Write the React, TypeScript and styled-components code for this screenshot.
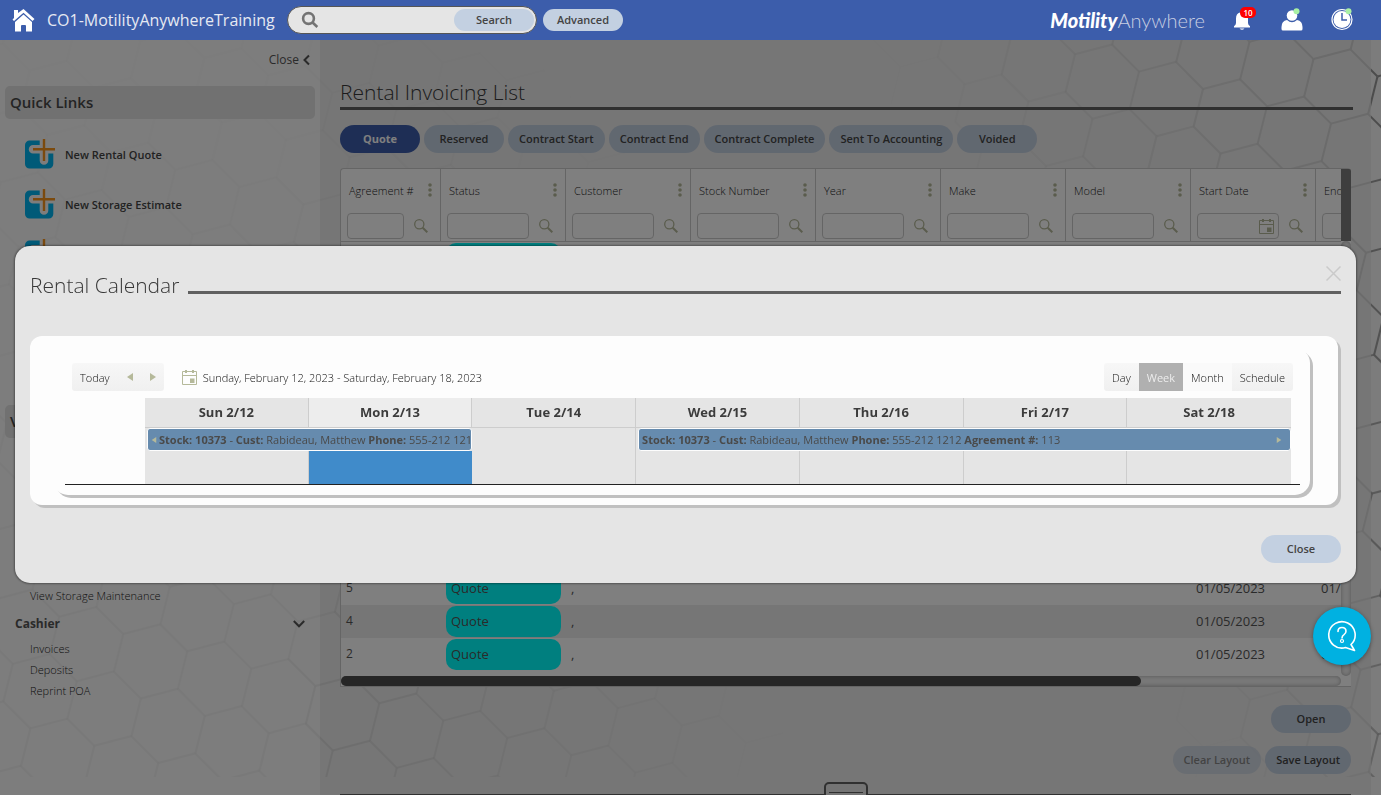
import React from "react";
import styled, { createGlobalStyle, css } from "styled-components";

const GlobalStyle = createGlobalStyle`
  * { box-sizing: border-box; }
  html, body { margin: 0; padding: 0; }
  body, button, input {
    font-family: "Open Sans", "Liberation Sans", sans-serif;
    font-size: 11px;
    color: #555;
  }
  button { margin: 0; padding: 0; border: 0; background: none; cursor: pointer; }
  a { color: inherit; text-decoration: none; }
  ul { list-style: none; margin: 0; padding: 0; }
  h1, h2, h3 { margin: 0; }
`;

/* ---------- frame ---------- */

const Page = styled.div`
  position: relative;
  display: flex;
  flex-direction: column;
  height: 100vh;
  overflow: hidden;
  background: #f8f8f8;
`;

const TopBar = styled.header`
  flex: none;
  display: flex;
  align-items: center;
  height: 40px;
  padding: 0 28px 0 11px;
  background: #3c5dab;
`;

const Shell = styled.div`
  position: relative;
  flex: 1;
  min-height: 0;
  display: grid;
  grid-template-columns: 320px minmax(0, 1fr);
  padding-right: 10px;
`;

const Comb = styled.svg<{ $side: "left" | "right" }>`
  position: absolute;
  top: 0;
  ${(p) => p.$side}: 0;
`;

/* ---------- top bar ---------- */

const HomeLink = styled.a`
  display: flex;
  width: 24px;
`;

const SiteName = styled.div`
  margin-left: 12px;
  width: 240px;
  font-size: 16px;
  line-height: 24px;
  color: #e6e9f2;
  white-space: nowrap;
`;

const SearchBox = styled.form`
  display: flex;
  align-items: center;
  width: 250px;
  height: 28px;
  padding: 0 2px 0 13px;
  border: 1px solid #555;
  border-radius: 14px;
  background: #e5e5e5;
`;

const SearchInput = styled.input`
  flex: 1;
  min-width: 0;
  border: 0;
  outline: 0;
  background: transparent;
`;

const Pill = styled.button<{ $active?: boolean; $short?: boolean; $faded?: boolean }>`
  flex: none;
  min-width: 80px;
  height: ${(p) => (p.$short ? 22 : 28)}px;
  padding: 0 11px 1px;
  border-radius: 14px;
  font-weight: ${(p) => (p.$active ? 700 : 600)};
  white-space: nowrap;
  background: ${(p) => (p.$active ? "#3c5dab" : "#c3d0e1")};
  color: ${(p) => (p.$active ? "#fff" : "#444")};
  opacity: ${(p) => (p.$faded ? 0.6 : 1)};
`;

const AdvancedSlot = styled.div`
  display: flex;
  margin-left: 6px;
`;

const Brand = styled.div`
  margin-left: auto;
  font-family: Lato, sans-serif;
  font-size: 20px;
  line-height: 24px;
  font-weight: 300;
  color: #c8cfe2;
  white-space: nowrap;
  b { font-weight: 900; font-style: italic; color: #fff; }
`;

const TopIcons = styled.nav`
  display: flex;
  align-items: center;
  gap: 28px;
  margin-left: 26px;
`;

const TopIcon = styled.button`
  position: relative;
  display: flex;
  width: 22px;
  height: 24px;
`;

const Badge = styled.span`
  position: absolute;
  top: -1px;
  left: 9px;
  width: 16px;
  height: 11px;
  border-radius: 5px;
  background: #f00;
  color: #fff;
  font-size: 8px;
  line-height: 11px;
  font-weight: 600;
  text-align: center;
`;

/* ---------- sidebar ---------- */

const Sidebar = styled.aside`
  position: relative;
  padding: 0 5px;
  background: rgba(250, 250, 250, 0.8);
`;

const CollapseButton = styled.button`
  display: flex;
  align-items: center;
  gap: 4px;
  margin-left: auto;
  padding: 10px 5px 16px 0;
  font-size: 12px;
  line-height: 20px;
`;

const SectionTitle = styled.h2`
  height: 33px;
  padding: 0 5px;
  border-radius: 5px;
  background: #e2e2e2;
  font-size: 15px;
  line-height: 32px;
  font-weight: 600;
  color: #484848;
`;

const QuickList = styled.ul`
  min-height: 276px;
  padding: 10px 20px 0;
  margin-bottom: 10px;
`;

const QuickItem = styled.li`
  a {
    display: flex;
    align-items: center;
    gap: 10px;
    height: 50px;
    font-weight: 600;
    color: #444;
  }
`;

const LinkList = styled.ul<{ $tall?: boolean }>`
  display: flex;
  flex-direction: column;
  justify-content: flex-end;
  padding-left: 25px;
  font-weight: 300;
  color: #1c1c1c;
  ${(p) => p.$tall && css`min-height: 168px;`}
  a { display: block; line-height: 21px; }
`;

const GroupToggle = styled.button`
  display: flex;
  align-items: center;
  justify-content: space-between;
  width: 100%;
  height: 32px;
  padding: 3px 10px 0;
  font-size: 12px;
  font-weight: 700;
`;

/* ---------- main ---------- */

const Main = styled.main`
  position: relative;
  padding: 40px 20px 0;
  background: rgba(232, 232, 232, 0.75);
`;

const PageTitle = styled.h1`
  margin-right: -2px;
  padding-bottom: 2px;
  border-bottom: 3px solid #606060;
  font-size: 21px;
  line-height: 25px;
  font-weight: 300;
  color: #383838;
`;

const TabBar = styled.div`
  display: flex;
  gap: 4px;
  margin: 15px 0;
`;

const GridBox = styled.div`
  display: grid;
  grid-template-columns: minmax(0, 1fr) 10px;
  border: 1px solid #cacaca;
  border-right: 0;
  border-radius: 4px 4px 0 0;
  background: #fff;
`;

const GridClip = styled.div`
  overflow: hidden;
  padding-bottom: 5px;
`;

const DataTable = styled.table`
  width: 1100px;
  table-layout: fixed;
  border-collapse: separate;
  border-spacing: 0;
`;

const HeadCell = styled.th<{ $w: number }>`
  width: ${(p) => p.$w}px;
  height: 73px;
  padding: 11px 7px 0 6px;
  border-right: 1px solid #cacaca;
  border-bottom: 1px solid #cacaca;
  vertical-align: top;
  text-align: left;
  font-weight: 300;
  color: #1c1c1c;
`;

const HeadLabel = styled.div`
  display: flex;
  align-items: center;
  justify-content: space-between;
  height: 20px;
  padding: 0 1px 0 2px;
  white-space: nowrap;
`;

const FilterRow = styled.div`
  display: flex;
  align-items: center;
  gap: 10px;
  margin-top: 13px;
  padding-right: 5px;
  svg { flex: none; }
`;

const FilterField = styled.label`
  flex: 1;
  min-width: 0;
  display: flex;
  align-items: center;
  height: 26px;
  padding-right: 4px;
  border: 1px solid #cacaca;
  border-radius: 4px;
  input { width: 100%; min-width: 0; border: 0; outline: 0; background: none; }
`;

const Row = styled.tr`
  height: 33px;
  font-size: 13px;
  &:nth-child(even) { background: #ececec; }
`;

const Cell = styled.td<{ $small?: boolean }>`
  height: 33px;
  padding: 0 5px 1px;
  line-height: 20px;
  ${(p) => p.$small && css`font-size: 12px;`}
`;

const StatusTag = styled.div`
  height: 31px;
  padding: 0 5px;
  border-radius: 10px;
  background: #00ffff;
  line-height: 31px;
`;

const SideRail = styled.div`
  display: flex;
  flex-direction: column;
`;

const RailTop = styled.div`
  height: 72px;
  border-radius: 0 2px 0 0;
  background: #7c7c7c;
`;

const RailTrack = styled.div`
  flex: 1;
  border-radius: 5px;
  background: #f2f2f2;
  box-shadow: inset 0 0 4px #aaa;
`;

const BottomTrack = styled.div`
  height: 10px;
  border-radius: 5px;
  background: #f2f2f2;
  box-shadow: inset 0 0 4px #aaa;
`;

const BottomThumb = styled.div`
  width: 80%;
  height: 10px;
  border-radius: 5px;
  background: #4c4c4c;
`;

const Actions = styled.div`
  display: flex;
  flex-direction: column;
  gap: 13px;
  margin-top: 18px;
`;

const ButtonRow = styled.div`
  display: flex;
  justify-content: flex-end;
  gap: 4px;
`;

const Drawer = styled.footer`
  position: relative;
  margin-top: 20px;
  border-top: 2px solid #606060;
`;

const DrawerHandle = styled.button`
  position: absolute;
  left: 50%;
  top: -14px;
  width: 44px;
  height: 24px;
  margin-left: -22px;
  padding: 7px 3px;
  border: 2px solid #606060;
  border-radius: 5px;
  background: #e8e8e8;
  span { display: block; height: 4px; border: solid #606060; border-width: 1px 0; }
`;

/* ---------- dialog ---------- */

const Overlay = styled.div`
  position: fixed;
  inset: 40px 0 0;
  display: flex;
  align-items: center;
  padding: 0 25px 6px 15px;
  background: rgba(0, 0, 0, 0.5);
`;

const Dialog = styled.section`
  flex: 1;
  min-width: 0;
  padding: 20px 15px;
  border-radius: 15px;
  background: #e5e5e5;
  box-shadow: 0 0 2px 1px rgba(0, 0, 0, 0.35);
`;

const DialogHead = styled.div`
  position: relative;
  display: flex;
  align-items: flex-end;
  gap: 9px;
  h2 { font-size: 21px; line-height: 28px; font-weight: 300; padding: 5px 0 1px; color: #383838; }
`;

const TitleRule = styled.div`
  flex: 1;
  height: 3px;
  margin-bottom: 6px;
  background: #606060;
`;

const DismissButton = styled.button`
  position: absolute;
  top: 0;
  right: 0;
  display: flex;
`;

const Panel = styled.div`
  margin: 36px 3px 0 0;
  padding: 12px 28px 10px 23px;
  border-radius: 12px;
  background: #fdfdfd;
  box-shadow: 3px 3px 0 #c0c0c0;
`;

const Scheduler = styled.div`
  padding: 15px 10px 10px 12px;
  border-radius: 15px;
  background: #fdfdfd;
  box-shadow: 3px 3px 0 #c0c0c0;
`;

const Toolbar = styled.div`
  display: flex;
  align-items: center;
  padding: 0 7px;
`;

const Segment = styled.div`
  display: flex;
  height: 28px;
  border-radius: 3px;
  overflow: hidden;
  background: linear-gradient(#f7f7f7, #f0f0f0);
`;

const SegmentButton = styled.button<{ $on?: boolean; $hover?: boolean }>`
  display: flex;
  align-items: center;
  padding: 0 8px;
  font-weight: 300;
  color: #111;
  &[aria-label] { padding: 0 7px 0 8px; }
  ${(p) => p.$on && css`background: #b0b0b0; color: #ececec; font-weight: 400;`}
  ${(p) => p.$hover && css`background: #fafafa;`}
`;

const RangeLabel = styled.div`
  display: flex;
  align-items: center;
  gap: 6px;
  margin: 0 auto 0 18px;
  font-weight: 300;
  color: #111;
`;

const CalendarFrame = styled.div`
  margin-top: 7px;
  padding: 0 9px 0 80px;
  border-bottom: 1px solid #222;
`;

const Calendar = styled.table`
  width: 100%;
  table-layout: fixed;
  border-collapse: separate;
  border-spacing: 0;
  background: #e5e5e5;
`;

const DayHead = styled.th<{ $today?: boolean }>`
  height: 30px;
  padding: 0 0 2px;
  border-bottom: 1px solid #cdcdcd;
  border-right: 1px solid #cdcdcd;
  font-size: 13px;
  font-weight: 700;
  color: #3c3c3c;
  background: ${(p) => (p.$today ? "#ededed" : "#e5e5e5")};
  &:last-child { border-right: 0; }
`;

const DayCell = styled.td<{ $today?: boolean }>`
  height: 33px;
  padding: 0;
  border-right: 1px solid ${(p) => (p.$today ? "#408bca" : "#cdcdcd")};
  background: ${(p) => (p.$today ? "#408bca" : "transparent")};
  &:last-child { border-right: 0; }
`;

const EventCell = styled.td`
  height: 23px;
  padding: 0 0 0 2px;
  &:nth-child(2) { border-right: 1px solid #cdcdcd; }
`;

const EventBar = styled.div`
  display: flex;
  align-items: center;
  gap: 2px;
  height: 23px;
  padding: 0 8px 0 3px;
  border: 1px solid #fdfdfd;
  border-radius: 3px;
  background: #668bae;
  color: #4a4a4a;
  white-space: nowrap;
  overflow: hidden;
  &:has(svg:first-child) { padding-right: 0; }
  svg { flex: none; }
`;

const EventText = styled.span`
  flex: 1;
  min-width: 0;
  overflow: hidden;
`;

const DialogFoot = styled.div`
  display: flex;
  justify-content: flex-end;
  margin-top: 30px;
`;

const HelpButton = styled.button`
  position: fixed;
  right: 10px;
  bottom: 130px;
  display: flex;
  align-items: center;
  justify-content: center;
  width: 58px;
  height: 58px;
  border-radius: 29px;
  background: #00b1e1;
  box-shadow: 0 1px 4px rgba(0, 0, 0, 0.4);
`;

/* ---------- drawings ---------- */

// Three edges leave every even vertex of the tilted honeycomb.
const STEP_A = [64, 17.33];
const STEP_B = [46.5, -47.2];
const SPOKES = [[37.2, -9.8], [-9.3, 37.4], [-27.3, -27.3]];

function Honeycomb({ side, width, origin, fade }: {
  side: "left" | "right"; width: number; origin: number[];
  fade: (x: number, y: number) => number;
}) {
  const height = 737;
  const edges: React.ReactNode[] = [];
  for (let i = -20; i <= 20; i++) {
    for (let j = -20; j <= 20; j++) {
      const x = origin[0] + i * STEP_A[0] + j * STEP_B[0];
      const y = origin[1] + i * STEP_A[1] + j * STEP_B[1];
      if (x < -50 || x > width + 50 || y < -50 || y > height + 50) continue;
      const o = Math.max(0, Math.min(1, fade(x, y)));
      if (o < 0.02) continue;
      SPOKES.forEach(([dx, dy], k) =>
        edges.push(<line key={`${i},${j},${k}`} x1={x} y1={y} x2={x + dx} y2={y + dy} strokeOpacity={o} />));
    }
  }
  return (
    <Comb $side={side} width={width} height={height} stroke="#989898" strokeWidth={2} aria-hidden>
      {edges}
    </Comb>
  );
}

const HomeIcon = () => (
  <svg width="24" height="24" viewBox="0 0 24 24" fill="#fff">
    <path d="M3 2h4v3L12.500 1 23.500 11l-2 2L12.500 4.800 3 13 1.500 11.500 3 10z" />
    <path d="M12.500 6.500 21 14v9.500h-6V18q0-1-1-1h-3q-1 0-1 1v5.500H4V14z" />
  </svg>
);

const SearchGlyph = () => (
  <svg width="18" height="18" viewBox="0 0 18 18" fill="none" stroke="#737373" strokeWidth="2.600">
    <circle cx="7.500" cy="7.500" r="5.400" />
    <path d="M11.300 11.300l5 4.700" />
  </svg>
);

const BellIcon = () => (
  <svg width="22" height="24" viewBox="0 0 22 24" fill="#fff">
    <path d="M9 4.500q2-1.500 4 0 4 1.200 4 6v4.500q0 2 2 3.200v1.300H3v-1.300q2-1.200 2-3.200v-4.500q0-4.800 4-6z" />
    <path d="M8.500 20.500h5q-2.500 2.400-5 0z" />
  </svg>
);

const UserIcon = () => (
  <svg width="22" height="24" viewBox="0 0 22 24" fill="#fff">
    <circle cx="11" cy="7.500" r="5.300" />
    <path d="M6 12q5 4.500 10 0 5.500 1 5.500 7v2q0 1.500-1.500 1.500H2Q.5 22.500.5 21v-2q0-6 5.500-7z" />
    <circle cx="15.500" cy="3.200" r="3" fill="#a9f0a4" />
  </svg>
);

const ClockIcon = () => (
  <svg width="22" height="24" viewBox="0 0 22 24">
    <circle cx="11" cy="11.500" r="10" fill="none" stroke="#fff" strokeWidth="1.200" />
    <circle cx="11" cy="11.500" r="8.500" fill="#fff" />
    <path d="M11 5v7h5" fill="none" stroke="#3c5dab" strokeWidth="1.500" />
    <circle cx="17.500" cy="3.200" r="3" fill="#a9f0a4" />
  </svg>
);

const QuickIcon = () => (
  <svg width="30" height="30" viewBox="0 0 30 30">
    <path d="M5 1.500h9.700V6H8a4 4 0 0 0 0 8.500h6.700v7a4.300 4.300 0 0 0 8.600 0v-7h5V25a4.500 4.500 0 0 1-4.500 4.500H4.500A4.500 4.500 0 0 1 0 25V6a4.500 4.500 0 0 1 5-4.500z" fill="#00b4f0" />
    <path d="M8 10.300h22M19 0v22" stroke="#f7941d" strokeWidth="2.400" />
  </svg>
);

const KebabIcon = () => (
  <svg width="4" height="14" viewBox="0 0 4 14" fill="#b5b99a">
    <circle cx="2" cy="2" r="1.800" /><circle cx="2" cy="7" r="1.800" /><circle cx="2" cy="12" r="1.800" />
  </svg>
);

const FilterIcon = () => (
  <svg width="14" height="14" viewBox="0 0 14 14" fill="none" stroke="#b5b99a">
    <circle cx="5.300" cy="5.300" r="4.600" strokeWidth="1.300" />
    <path d="M8.700 8.700l4.600 4.600" strokeWidth="2" />
  </svg>
);

const CalendarIcon = () => (
  <svg width="15" height="15" viewBox="0 0 15 15" fill="none" stroke="#b5b99a">
    <path d="M.5 1.500h14v13H.5zM.5 5.500h14" />
    <path d="M4 0v3M11 0v3" strokeWidth="2" />
    <path d="M8 8.500h4.500V13H8z" fill="#b5b99a" stroke="none" />
  </svg>
);

const Arrow = ({ dir, size = 8 }: { dir: "left" | "right"; size?: number }) => (
  <svg width={size} height={size} viewBox="0 0 8 8" fill="#b5b99a">
    <path d={dir === "left" ? "M7 0v8L1 4z" : "M1 0v8l6-4z"} />
  </svg>
);

/* ---------- data ---------- */

const tabs = ["Quote", "Reserved", "Contract Start", "Contract End", "Contract Complete", "Sent To Accounting", "Voided"];
const columns = ["Agreement #", "Status", "Customer", "Stock Number", "Year", "Make", "Model", "Start Date", "End Date"];
const rows = [...Array(10).fill(null), "5", "4", "2"] as (string | null)[];
const days = ["Sun 2/12", "Mon 2/13", "Tue 2/14", "Wed 2/15", "Thu 2/16", "Fri 2/17", "Sat 2/18"];

const Booking = () => (
  <EventText>
    <b>Stock: 10373</b> - <b>Cust:</b> Rabideau, Matthew <b>Phone:</b> 555-212 1212 <b>Agreement #:</b> 113
  </EventText>
);

export default function App() {
  return (
    <Page>
      <GlobalStyle />
      <TopBar>
        <HomeLink href="#" aria-label="Home"><HomeIcon /></HomeLink>
        <SiteName>CO1-MotilityAnywhereTraining</SiteName>
        <SearchBox onSubmit={(e) => e.preventDefault()}>
          <SearchGlyph />
          <SearchInput aria-label="Search" />
          <Pill $short>Search</Pill>
        </SearchBox>
        <AdvancedSlot><Pill $short>Advanced</Pill></AdvancedSlot>
        <Brand><b>Motility</b>Anywhere</Brand>
        <TopIcons>
          <TopIcon aria-label="Notifications"><BellIcon /><Badge>10</Badge></TopIcon>
          <TopIcon aria-label="Account"><UserIcon /></TopIcon>
          <TopIcon aria-label="Time clock"><ClockIcon /></TopIcon>
        </TopIcons>
      </TopBar>

      <Shell>
        <Honeycomb side="left" width={900} origin={[123.3, 594]}
          fade={(x, y) => {
            const base = x < 300 ? 0.42 : 0.65;
            return base * (1 - Math.hypot(Math.max(0, x - 340) / 440, (737 - y) / 850));
          }} />
        <Honeycomb side="right" width={600} origin={[294, 14.3]}
          fade={(x, y) => 1.1 * (1 - (600 - x) / (510 - y * 0.45)) * (1 - y / 1400)} />

        <Sidebar>
          <CollapseButton>
            Close
            <svg width="7" height="12" viewBox="0 0 7 12" fill="none" stroke="#555" strokeWidth="2"><path d="M6 1.500L1.500 6 6 10.500" /></svg>
          </CollapseButton>
          <SectionTitle>Quick Links</SectionTitle>
          <QuickList>
            <QuickItem><a href="#"><QuickIcon />New Rental Quote</a></QuickItem>
            <QuickItem><a href="#"><QuickIcon />New Storage Estimate</a></QuickItem>
            <QuickItem><a href="#" aria-label="New"><QuickIcon /></a></QuickItem>
          </QuickList>
          <SectionTitle>V</SectionTitle>
          <LinkList $tall>
            <li><a href="#">View Storage Maintenance</a></li>
          </LinkList>
          <GroupToggle>
            Cashier
            <svg width="12" height="8" viewBox="0 0 12 8" fill="none" stroke="#555" strokeWidth="2"><path d="M.8 1L6 6.300 11.200 1" /></svg>
          </GroupToggle>
          <LinkList>
            <li><a href="#">Invoices</a></li>
            <li><a href="#">Deposits</a></li>
            <li><a href="#">Reprint POA</a></li>
          </LinkList>
        </Sidebar>

        <Main>
          <PageTitle>Rental Invoicing List</PageTitle>
          <TabBar>
            {tabs.map((t, i) => <Pill key={t} $active={i === 0}>{t}</Pill>)}
          </TabBar>
          <GridBox>
            <GridClip>
              <DataTable>
                <thead>
                  <tr>
                    {columns.map((c, i) => (
                      <HeadCell key={c} $w={i === 0 ? 100 : 125}>
                        <HeadLabel>{c}<KebabIcon /></HeadLabel>
                        <FilterRow>
                          <FilterField>
                            <input aria-label={`Filter ${c}`} />
                            {c.endsWith("Date") && <CalendarIcon />}
                          </FilterField>
                          <FilterIcon />
                        </FilterRow>
                      </HeadCell>
                    ))}
                  </tr>
                </thead>
                <tbody>
                  {rows.map((id, i) => (
                    <Row key={i}>
                      <Cell $small>{id}</Cell>
                      <Cell><StatusTag>{id && "Quote"}</StatusTag></Cell>
                      <Cell>{id && ","}</Cell>
                      <Cell /><Cell /><Cell /><Cell />
                      <Cell>{id && "01/05/2023"}</Cell>
                      <Cell>{id && "01/05/2023"}</Cell>
                    </Row>
                  ))}
                </tbody>
              </DataTable>
            </GridClip>
            <SideRail><RailTop /><RailTrack /></SideRail>
            <BottomTrack><BottomThumb /></BottomTrack>
          </GridBox>
          <Actions>
            <ButtonRow><Pill>Open</Pill></ButtonRow>
            <ButtonRow>
              <Pill $faded>Clear Layout</Pill>
              <Pill>Save Layout</Pill>
            </ButtonRow>
          </Actions>
          <Drawer>
            <DrawerHandle aria-label="Expand details"><span /></DrawerHandle>
          </Drawer>
        </Main>
      </Shell>

      <Overlay>
        <Dialog role="dialog" aria-labelledby="rental-calendar">
          <DialogHead>
            <h2 id="rental-calendar">Rental Calendar</h2>
            <TitleRule />
            <DismissButton aria-label="Dismiss">
              <svg width="15" height="15" viewBox="0 0 15 15" stroke="#cacaca" strokeWidth="1.500"><path d="M.5.5l14 14M14.500.5l-14 14" /></svg>
            </DismissButton>
          </DialogHead>
          <Panel>
            <Scheduler>
              <Toolbar>
                <Segment>
                  <SegmentButton>Today</SegmentButton>
                  <SegmentButton aria-label="Previous"><Arrow dir="left" /></SegmentButton>
                  <SegmentButton aria-label="Next"><Arrow dir="right" /></SegmentButton>
                </Segment>
                <RangeLabel><CalendarIcon />Sunday, February 12, 2023 - Saturday, February 18, 2023</RangeLabel>
                <Segment>
                  <SegmentButton>Day</SegmentButton>
                  <SegmentButton $on>Week</SegmentButton>
                  <SegmentButton $hover>Month</SegmentButton>
                  <SegmentButton>Schedule</SegmentButton>
                </Segment>
              </Toolbar>
              <CalendarFrame>
                <Calendar>
                  <thead>
                    <tr>{days.map((d, i) => <DayHead key={d} $today={i === 1}>{d}</DayHead>)}</tr>
                  </thead>
                  <tbody>
                    <tr>
                      <EventCell colSpan={2}><EventBar><Arrow dir="left" size={6} /><Booking /></EventBar></EventCell>
                      <EventCell />
                      <EventCell colSpan={4}><EventBar><Booking /><Arrow dir="right" size={6} /></EventBar></EventCell>
                    </tr>
                    <tr>{days.map((d, i) => <DayCell key={d} $today={i === 1} />)}</tr>
                  </tbody>
                </Calendar>
              </CalendarFrame>
            </Scheduler>
          </Panel>
          <DialogFoot><Pill>Close</Pill></DialogFoot>
        </Dialog>
      </Overlay>

      <HelpButton aria-label="Help">
        <svg width="30" height="32" viewBox="0 0 30 32" fill="none" stroke="#fff" strokeWidth="1.600" strokeLinejoin="round">
          <path d="M24 24.500A13.200 13.200 0 1 0 18.500 27.600L27.500 30.500z" />
          <path d="M11 11.500q0-4 4-4t4 3.800q0 2-2 3.300-2 1.200-2 3.400" strokeLinecap="round" />
          <circle cx="15" cy="21" r="1.500" strokeWidth="1.200" />
        </svg>
      </HelpButton>
    </Page>
  );
}
